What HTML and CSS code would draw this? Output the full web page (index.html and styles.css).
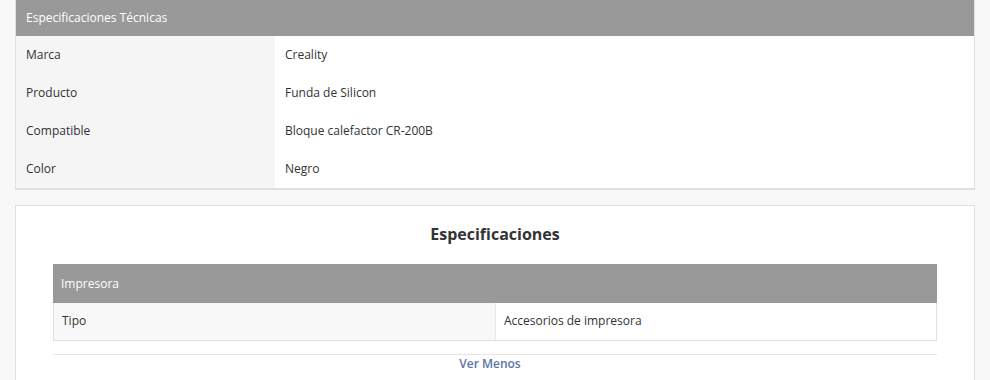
FILE: index.html
```html
<!DOCTYPE html>
<html lang="es">
<head>
<meta charset="utf-8">
<link rel="stylesheet" href="styles.css">
</head>
<body>
<div class="page">
  <section class="card tech">
    <div class="tech-head">Especificaciones Técnicas</div>
    <div class="tech-row"><div class="label">Marca</div><div class="value">Creality</div></div>
    <div class="tech-row"><div class="label">Producto</div><div class="value">Funda de Silicon</div></div>
    <div class="tech-row"><div class="label">Compatible</div><div class="value">Bloque calefactor CR-200B</div></div>
    <div class="tech-row"><div class="label">Color</div><div class="value">Negro</div></div>
  </section>
  <section class="card specs">
    <h2 class="specs-title">Especificaciones</h2>
    <div class="spec-table">
      <div class="spec-head">Impresora</div>
      <div class="spec-row"><div class="spec-label">Tipo</div><div class="spec-value">Accesorios de impresora</div></div>
    </div>
    <div class="more"><a class="more-link" href="#">Ver Menos</a></div>
  </section>
</div>
</body>
</html>
```
FILE: styles.css
```css
* { box-sizing: border-box; }
html, body { margin: 0; padding: 0; }
body {
  background: #f8f8f8;
  font-family: "Open Sans", "Liberation Sans", sans-serif;
  font-size: 12px;
  color: #333;
}
.page {
  padding: 0 15px;
  display: flex;
  flex-direction: column;
  gap: 15px;
}
.card {
  background: #fff;
  border: 1px solid #e0e0e0;
}
.tech {
  border-top: none;
  border-bottom: 2px solid #e0e0e0;
}
.tech-head {
  background: #999;
  color: #fff;
  height: 36px;
  line-height: 36px;
  padding-left: 10px;
}
.tech-row {
  display: flex;
  height: 38px;
  line-height: 38px;
}
.label {
  width: 259px;
  background: #f5f5f5;
  padding-left: 10px;
}
.value {
  flex: 1;
  padding-left: 10px;
}
.specs {
  padding: 0 37px;
  height: 180px;
}
.specs-title {
  margin: 0;
  text-align: center;
  font-size: 16px;
  font-weight: 700;
  color: #333;
  height: 58px;
  line-height: 56px;
}
.spec-table {
  border: 1px solid #e0e0e0;
  border-top: none;
}
.spec-head {
  background: #999;
  color: #fff;
  height: 39px;
  line-height: 40px;
  padding-left: 8px;
  margin: 0 -1px;
}
.spec-row {
  display: flex;
  height: 37px;
  line-height: 36px;
}
.spec-label {
  width: 442px;
  background: #f8f8f8;
  padding-left: 8px;
  border-right: 1px solid #e8e8e8;
}
.spec-value {
  flex: 1;
  padding-left: 8px;
}
.more {
  margin-top: 13px;
  border-top: 1px solid #e5e5e5;
  text-align: center;
  line-height: 17px;
  padding-right: 10px;
}
.more-link {
  color: #5b74a8;
  text-decoration: none;
  font-weight: 600;
}
```
